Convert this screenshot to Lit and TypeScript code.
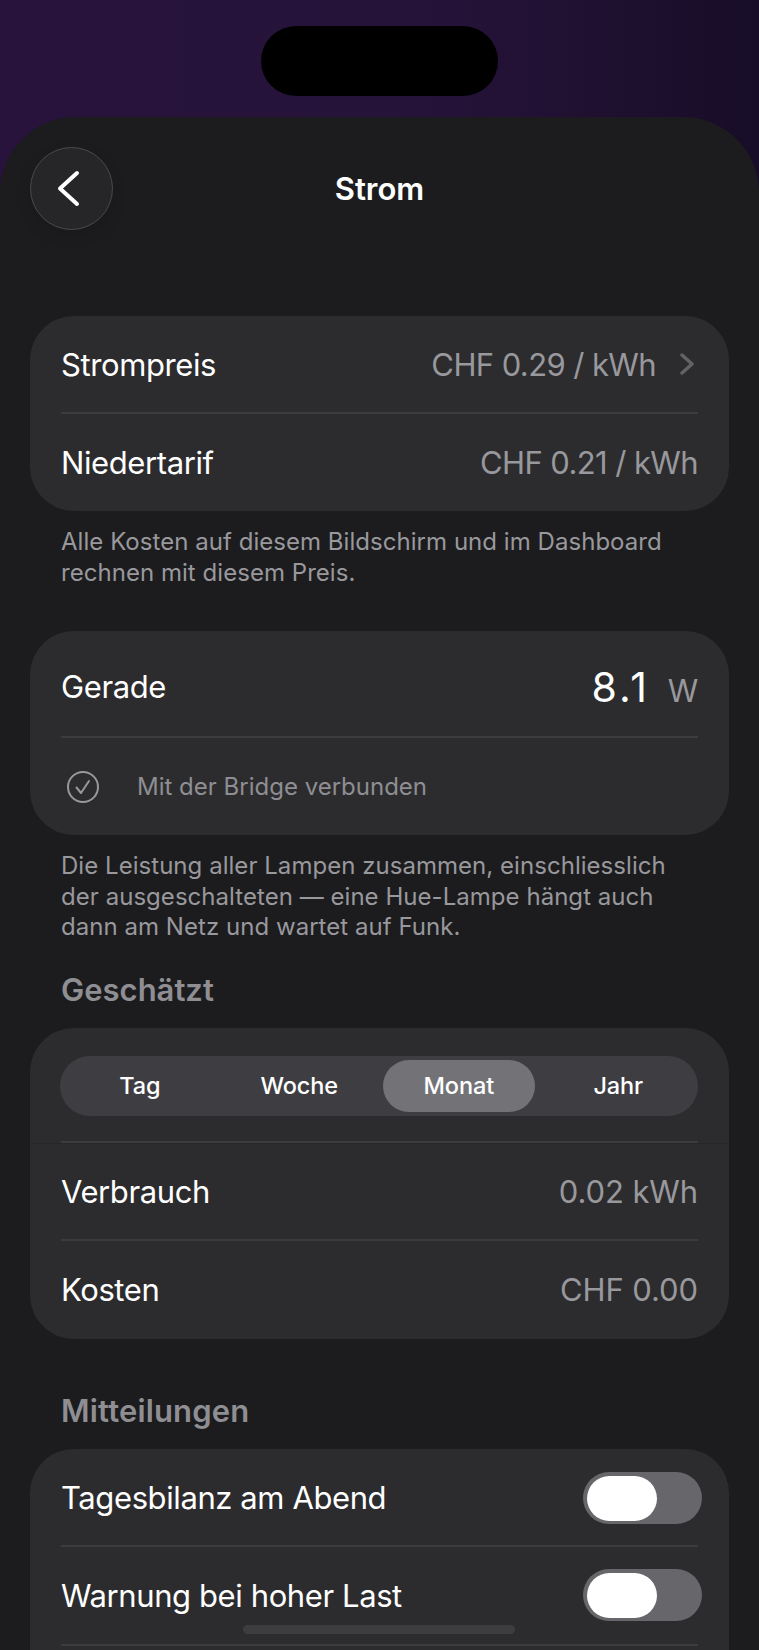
import { LitElement, html, css } from "lit";
import { customElement } from "lit/decorators.js";

@customElement("app-root")
export class AppRoot extends LitElement {
  static styles = css`
    :host { display: block; width: 759px; height: 1650px; overflow: hidden; position: relative;
      background: linear-gradient(90deg, #27133b 0%, #26133a 55%, #1d0f2e 85%, #170d28 100%);
      font-family: Inter, "Liberation Sans", sans-serif; color: #fff; }
    .top { height: 117px; display: flex; justify-content: center; padding-top: 26px; box-sizing: border-box; }
    .island { width: 237px; height: 70px; border-radius: 35px; background: #000; }
    .sheet { background: #1c1c1e; border-radius: 76px 76px 0 0; padding: 30px 30px 0; height: 1533px; box-sizing: border-box; }
    .nav { display: grid; grid-template-columns: 83px 1fr 83px; align-items: center; height: 83px; }
    .back { width: 83px; height: 83px; border-radius: 50%; box-sizing: border-box; border: 1.5px solid #4a4a4c; background: #262628;
      display: flex; align-items: center; justify-content: center; box-shadow: 0 6px 16px rgba(0,0,0,.12); }
    .chev { margin-left: -7px; }
    .title { text-align: center; font-size: 31px; font-weight: 600; }
    .card { background: #2c2c2e; border-radius: 44px; padding: 0 31px; }
    .c1 { margin-top: 86px; }
    .row { display: flex; align-items: center; justify-content: space-between; height: 97px; font-size: 31px; letter-spacing: -0.4px; }
    .row.first { height: 96px; }
    .row + .row, .bt { border-top: 2px solid #3c3c3e; }
    .val { color: #98989d; }
    .tight { letter-spacing: -0.6px; }
    .loose { letter-spacing: -0.1px; }
    .valc { display: flex; align-items: center; gap: 24px; margin-right: 4px; }
    .note { color: #98989d; font-size: 24px; line-height: 30.5px; margin: 0; padding: 0 31px; letter-spacing: 0.04px; }
    .n1 { margin-top: 16px; }
    .c2 { margin-top: 43px; }
    .gerade { height: 105px; padding-top: 6px; box-sizing: border-box; }
    .big { display: flex; align-items: baseline; }
    .big b { font-weight: 400; font-size: 41px; color: #fff; margin-right: 18px; letter-spacing: 3px; }
    .status { display: flex; align-items: center; height: 97px; color: #8e8e93; font-size: 24px; gap: 38px; padding-left: 6px; }
    .n2 { margin-top: 16px; }
    .head { color: #8e8e93; font-size: 31px; font-weight: 600; padding: 0 31px; margin: 0; line-height: 40px; }
    .h1 { margin-top: 27px; }
    .c3 { margin-top: 18px; }
    .segwrap { padding-top: 28px; height: 85px; position: relative; }
    .segwrap::after { content: ""; position: absolute; left: -31px; right: -31px; bottom: -3px; height: 1px; background: #272729; }
    .seg { display: grid; grid-template-columns: repeat(4, 1fr); height: 60px; border-radius: 30px; background: #3e3e42; font-size: 23.5px; font-weight: 500; letter-spacing: -0.1px; margin-left: -1px; }
    .seg span { display: flex; align-items: center; justify-content: center; border-radius: 26px; margin: 4px; }
    .seg .on { background: #737377; }
    .c3 .bt { height: 94px; padding-top: 2px; }
    .c3 .bt + .row { height: 98px; }
    .h2 { margin-top: 52px; letter-spacing: 0.15px; }
    .c4 { margin-top: 18px; }
    .c4 .first { height: 94px; padding-top: 2px; }
    .tg { width: 119px; height: 52px; border-radius: 26px; background: #67676b; padding: 4px; box-sizing: border-box; margin-right: -4px; }
    .tg i { display: block; width: 70px; height: 45px; border-radius: 22.5px; background: #fff; }
    .home { position: absolute; left: 243px; top: 1625px; width: 272px; height: 9px; border-radius: 5px; background: #3d3d3f; }
  `;

  render() {
    return html`
      <div class="top"><div class="island"></div></div>
      <div class="sheet">
        <div class="nav">
          <div class="back">
            <svg class="chev" width="25" height="39" viewBox="0 0 25 39" fill="none" stroke="#fff" stroke-width="4" stroke-linecap="round" stroke-linejoin="round"><path d="M21 4 L4 19.5 L21 35"/></svg>
          </div>
          <div class="title">Strom</div>
          <div></div>
        </div>

        <div class="card c1">
          <div class="row first"><span>Strompreis</span>
            <span class="valc"><span class="val tight">CHF 0.29 / kWh</span>
              <svg width="14" height="24" viewBox="0 0 14 24" fill="none" stroke="#636366" stroke-width="3.4" stroke-linecap="round" stroke-linejoin="round"><path d="M2 3 L12 12 L2 21"/></svg>
            </span></div>
          <div class="row"><span>Niedertarif</span><span class="val tight">CHF 0.21 / kWh</span></div>
        </div>
        <p class="note n1">Alle Kosten auf diesem Bildschirm und im Dashboard<br>rechnen mit diesem Preis.</p>

        <div class="card c2">
          <div class="row gerade"><span>Gerade</span><span class="big val"><b>8.1</b>W</span></div>
          <div class="status bt">
            <svg width="32" height="32" viewBox="0 0 32 32" fill="none" stroke="#98989d" stroke-width="2" stroke-linecap="round" stroke-linejoin="round"><circle cx="16" cy="16" r="15"/><path d="M9.5 16.5 L14 22 L22 10"/></svg>
            <span>Mit der Bridge verbunden</span>
          </div>
        </div>
        <p class="note n2">Die Leistung aller Lampen zusammen, einschliesslich<br>der ausgeschalteten — eine Hue-Lampe hängt auch<br>dann am Netz und wartet auf Funk.</p>

        <h2 class="head h1">Geschätzt</h2>
        <div class="card c3">
          <div class="segwrap">
            <div class="seg"><span>Tag</span><span>Woche</span><span class="on">Monat</span><span>Jahr</span></div>
          </div>
          <div class="row bt"><span>Verbrauch</span><span class="val loose">0.02 kWh</span></div>
          <div class="row"><span>Kosten</span><span class="val loose">CHF 0.00</span></div>
        </div>

        <h2 class="head h2">Mitteilungen</h2>
        <div class="card c4">
          <div class="row first"><span>Tagesbilanz am Abend</span><div class="tg"><i></i></div></div>
          <div class="row"><span>Warnung bei hoher Last</span><div class="tg"><i></i></div></div>
          <div class="row"></div>
        </div>
      </div>
      <div class="home"></div>
    `;
  }
}
